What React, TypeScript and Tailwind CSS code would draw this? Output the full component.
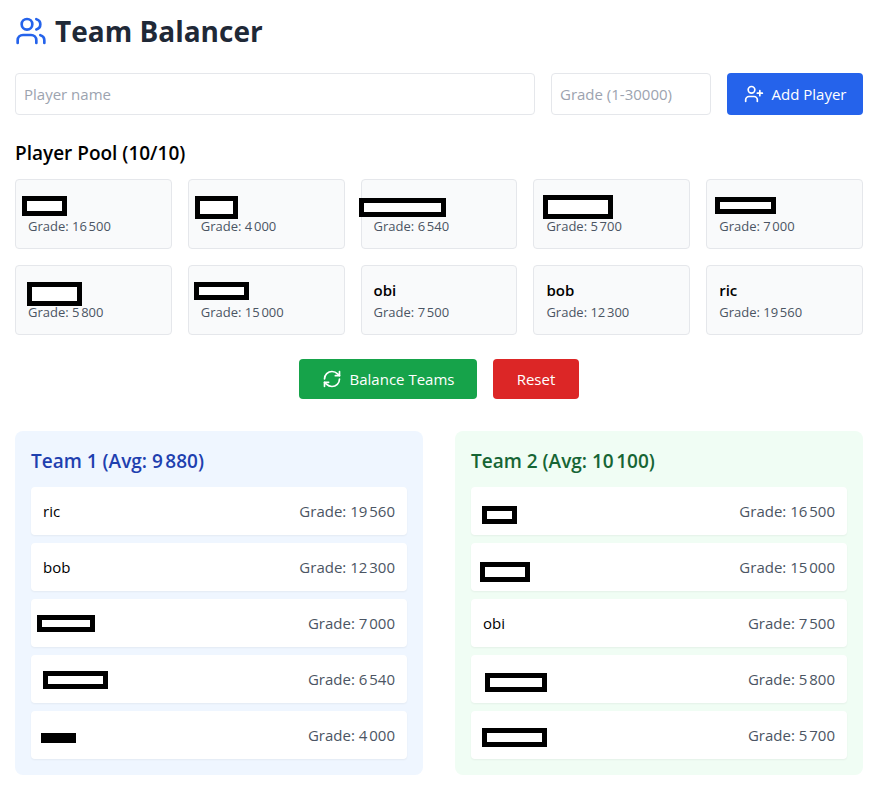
import { RefreshCw, UserPlus, Users } from "lucide-react";

type Player = {
  name?: string;
  grade: number;
  mask?: string;
};

const pool: Player[] = [
  { grade: 16500, mask: "left-[6px] top-[16px] w-[45px] h-[20px]" },
  { grade: 4000, mask: "left-[6px] top-[16px] w-[43px] h-[23px]" },
  { grade: 6540, mask: "-left-[3px] top-[18px] w-[87px] h-[19px]" },
  { grade: 5700, mask: "left-[9px] top-[15px] w-[70px] h-[24px]" },
  { grade: 7000, mask: "left-[8px] top-[17px] w-[61px] h-[17px]" },
  { grade: 5800, mask: "left-[11px] top-[16px] w-[55px] h-[24px]" },
  { grade: 15000, mask: "left-[5px] top-[16px] w-[55px] h-[18px]" },
  { name: "obi", grade: 7500 },
  { name: "bob", grade: 12300 },
  { name: "ric", grade: 19560 },
];

const team1: Player[] = [
  { name: "ric", grade: 19560 },
  { name: "bob", grade: 12300 },
  { grade: 7000, mask: "left-[6px] top-[16px] w-[58px] h-[17px]" },
  { grade: 6540, mask: "left-[12px] top-[16px] w-[65px] h-[18px]" },
  { grade: 4000, mask: "left-[10px] top-[22px] w-[35px] h-[9px]" },
];

const team2: Player[] = [
  { grade: 16500, mask: "left-[11px] top-[19px] w-[35px] h-[18px]" },
  { grade: 15000, mask: "left-[9px] top-[19px] w-[50px] h-[20px]" },
  { name: "obi", grade: 7500 },
  { grade: 5800, mask: "left-[14px] top-[18px] w-[62px] h-[19px]" },
  { grade: 5700, mask: "left-[11px] top-[17px] w-[65px] h-[19px]" },
];

// Thousands are separated by a narrow no-break space.
const format = (n: number) =>
  String(n).replace(/\B(?=(\d{3})+$)/g, "\u202f");

function Mask({ place }: { place: string }) {
  return <span className={`absolute border-[5px] border-black bg-white ${place}`} />;
}

function PoolCard({ player }: { player: Player }) {
  return (
    <li className="relative rounded border border-[#e5e7eb] bg-[#f9fafb] p-3">
      <div className="h-6 text-[15px] leading-6 font-semibold">{player.name}</div>
      <div className="text-[13px] leading-5 text-[#4b5563]">Grade: {format(player.grade)}</div>
      {player.mask && <Mask place={player.mask} />}
    </li>
  );
}

function Team({
  title,
  players,
  panel,
  heading,
}: {
  title: string;
  players: Player[];
  panel: string;
  heading: string;
}) {
  const average = players.reduce((sum, p) => sum + p.grade, 0) / players.length;
  return (
    <section className={`rounded-lg p-4 ${panel}`}>
      <h2 className={`mb-3 text-[19px] leading-7 font-semibold ${heading}`}>
        {title} (Avg: {format(Math.round(average))})
      </h2>
      <ul className="flex flex-col gap-2">
        {players.map((p) => (
          <li
            key={p.grade}
            className="relative flex items-center justify-between rounded bg-white p-3 shadow-xs"
          >
            <span>{p.name}</span>
            <span className="text-[#4b5563]">Grade: {format(p.grade)}</span>
            {p.mask && <Mask place={p.mask} />}
          </li>
        ))}
      </ul>
    </section>
  );
}

export default function App() {
  return (
    <main className="bg-white pt-[13px] pr-[10px] pb-[15px] pl-[15px] font-['Open_Sans','Noto_Sans',sans-serif] text-[15px] leading-6 text-black">
      <header className="mb-6 flex items-center gap-2">
        <Users size={32} className="text-[#2563eb]" />
        <h1 className="text-[28px] leading-9 font-bold text-[#1f2937]">Team Balancer</h1>
      </header>

      <form className="mb-6 flex gap-4" onSubmit={(e) => e.preventDefault()}>
        <input
          type="text"
          aria-label="Player name"
          placeholder="Player name"
          className="min-w-0 flex-1 rounded border border-[#e5e7eb] p-2 placeholder:text-[#9ca3af]"
        />
        <input
          type="number"
          aria-label="Grade"
          placeholder="Grade (1-30000)"
          className="w-40 rounded border border-[#e5e7eb] p-2 placeholder:text-[#9ca3af]"
        />
        <button
          type="submit"
          className="flex w-34 items-center justify-center gap-2 rounded bg-[#2563eb] py-2 text-white"
        >
          <UserPlus size={20} />
          Add Player
        </button>
      </form>

      <section className="mb-6">
        <h2 className="mb-3 text-[19px] leading-7 font-semibold">Player Pool (10/10)</h2>
        <ul className="grid grid-cols-5 gap-4">
          {pool.map((p) => (
            <PoolCard key={p.grade} player={p} />
          ))}
        </ul>
      </section>

      <div className="mb-8 flex justify-center gap-4">
        <button
          type="button"
          className="flex w-[178px] items-center justify-center gap-2 rounded bg-[#16a34a] py-2 text-white"
        >
          <RefreshCw size={20} />
          Balance Teams
        </button>
        <button type="button" className="w-[86px] rounded bg-[#dc2626] py-2 text-white">
          Reset
        </button>
      </div>

      <div className="grid grid-cols-2 gap-8">
        <Team title="Team 1" players={team1} panel="bg-[#eff6ff]" heading="text-[#1e40af]" />
        <Team title="Team 2" players={team2} panel="bg-[#f0fdf4]" heading="text-[#166534]" />
      </div>
    </main>
  );
}
